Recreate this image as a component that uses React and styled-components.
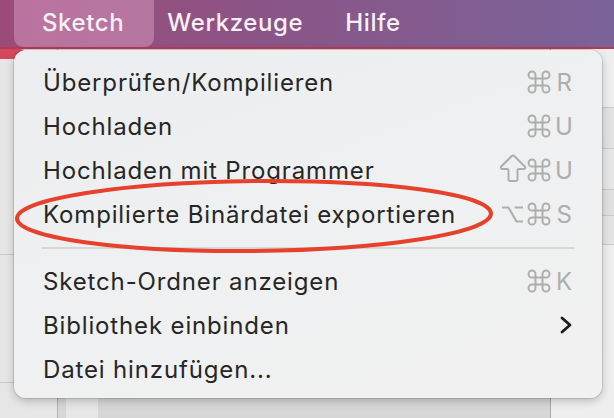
import React from "react";
import styled, { createGlobalStyle } from "styled-components";
import { Command, ArrowBigUp } from "lucide-react";

const Global = createGlobalStyle`
  html, body { margin: 0; padding: 0; }
  body {
    width: 614px; height: 418px; overflow: hidden;
    background: #e8e8e8;
    font-family: Inter, "Noto Sans", "Liberation Sans", sans-serif;
    -webkit-font-smoothing: antialiased;
  }
`;

const Page = styled.div`
  position: relative;
  width: 614px;
  height: 418px;
  display: flex;
  flex-direction: column;
  overflow: hidden;
`;

const MenuBar = styled.div`
  height: 47px;
  flex: none;
  display: flex;
  align-items: stretch;
  padding-left: 14px;
  background: linear-gradient(90deg, #9c4b78 0%, #8a5587 45%, #7a6399 100%);
  border-bottom: 2px solid #b43a55;
`;

const BarItem = styled.div`
  display: flex;
  align-items: center;
  padding: 0 ${(p) => p.$padR}px 2px ${(p) => p.$padL}px;
  margin-right: ${(p) => p.$gap || 0}px;
  font-size: 24px;
  letter-spacing: 0.6px;
  font-weight: 500;
  color: #f8f0f6;
  border-radius: 0 0 9px 9px;
  background: ${(p) => (p.$active ? "rgba(224, 164, 204, 0.45)" : "transparent")};
`;

const Desktop = styled.div`
  flex: 1;
  display: flex;
  flex-direction: row;
  background: #ececec;
`;

const LeftPane = styled.div`
  width: 57px;
  flex: none;
  display: flex;
  flex-direction: column;
  background: #e6e6e6;
`;

const RedCorner = styled.div`
  height: 10px;
  width: 30px;
  background: #d4485f;
  border-radius: 0 12px 0 0;
`;

const HLine = styled.div`
  height: 1px;
  background: #c8c8c8;
  margin-top: ${(p) => p.$top}px;
`;

const CenterPane = styled.div`
  flex: 1;
  display: flex;
  flex-direction: row;
  border-left: 1px solid #b0b0b0;
  border-right: 1px solid #a8a8a8;
  background: linear-gradient(180deg, #e4e4e4 0%, #d6d6d6 100%);
`;

const CenterStrip = styled.div`
  width: 32px;
  margin-left: 8px;
  background: #e6e6e6;
`;

const RightPane = styled.div`
  width: 63px;
  flex: none;
  display: flex;
  flex-direction: column;
  background: #eeeeee;
`;

const RightBand = styled.div`
  height: ${(p) => p.$h}px;
  background: ${(p) => p.$bg};
  border-bottom: 1px solid #c9c9c9;
`;

const Menu = styled.div`
  position: absolute;
  left: 14px;
  top: 50px;
  width: 588px;
  height: 348px;
  box-sizing: border-box;
  padding: 10px 0 7px;
  border-radius: 12px;
  background: linear-gradient(160deg, #ebedf0 0%, #eff0f1 50%, #f1f1f1 100%);
  box-shadow: 0 0 0 1px rgba(0, 0, 0, 0.1), 0 3px 8px rgba(0, 0, 0, 0.22);
  display: flex;
  flex-direction: column;
`;

const Row = styled.div`
  height: 44px;
  flex: none;
  display: flex;
  align-items: center;
  justify-content: space-between;
  padding: 0 30px 0 29px;
  font-size: 24px;
  color: #262626;
  letter-spacing: 0.85px;
`;

const Label = styled.span`
  white-space: nowrap;
`;

const Shortcut = styled.span`
  display: flex;
  align-items: center;
  gap: 4px;
  color: #adadad;
`;

const Key = styled.span`
  font-size: 24px;
  letter-spacing: 0;
  width: 17px;
  margin-left: 1px;
  text-align: right;
`;

const Separator = styled.div`
  height: 23px;
  flex: none;
  display: flex;
  align-items: center;
  padding: 0 28px;
  &::after {
    content: "";
    flex: 1;
    height: 2px;
    background: #d6d6d6;
  }
`;

const Overlay = styled.svg`
  position: absolute;
  left: 0;
  top: 0;
  pointer-events: none;
`;

function Chevron() {
  return (
    <svg width="12" height="18" viewBox="0 0 12 18">
      <path d="M2 2 L10 9 L2 16" fill="none" stroke="#1c1c1c" strokeWidth="2.8" strokeLinecap="round" strokeLinejoin="round" />
    </svg>
  );
}

function OptionKey() {
  return (
    <svg width="23" height="17" viewBox="0 0 23 17">
      <path d="M1 1.5 H7.5 L15.5 15.5 H22 M13.5 1.5 H22" fill="none" stroke="#adadad" strokeWidth="2.1" strokeLinejoin="round" />
    </svg>
  );
}

function CmdKey() {
  return (
    <Command size={28} strokeWidth={1.65} color="#adadad" style={{ margin: "-3px" }} />
  );
}

function ShiftKey() {
  return (
    <ArrowBigUp size={36} strokeWidth={1.3} color="#adadad" style={{ margin: "-8px -7px -6px" }} />
  );
}

const modIcons = { cmd: CmdKey, shift: ShiftKey, opt: OptionKey };

const items = [
  { label: "Überprüfen/Kompilieren", mods: ["cmd"], key: "R" },
  { label: "Hochladen", mods: ["cmd"], key: "U" },
  { label: "Hochladen mit Programmer", mods: ["shift", "cmd"], key: "U" },
  { label: "Kompilierte Binärdatei exportieren", mods: ["opt", "cmd"], key: "S" },
  { sep: true },
  { label: "Sketch-Ordner anzeigen", mods: ["cmd"], key: "K" },
  { label: "Bibliothek einbinden", submenu: true },
  { label: "Datei hinzufügen..." },
];

export default function App() {
  return (
    <>
      <Global />
      <Page>
        <MenuBar>
          <BarItem $active $padL={28} $padR={30}>Sketch</BarItem>
          <BarItem $padL={13} $padR={13} $gap={16}>Werkzeuge</BarItem>
          <BarItem $padL={13} $padR={13}>Hilfe</BarItem>
        </MenuBar>
        <Desktop>
          <LeftPane>
            <RedCorner />
            <HLine $top={195} />
            <HLine $top={127} />
          </LeftPane>
          <CenterPane>
            <CenterStrip />
          </CenterPane>
          <RightPane>
            <RightBand $h={58} $bg="#eeeeee" />
            <RightBand $h={40} $bg="#e2e2e2" />
            <RightBand $h={40} $bg="#e6e6e6" />
            <RightBand $h={25} $bg="#e0e0e0" />
            <RightBand $h={28} $bg="#e4e4e4" />
          </RightPane>
        </Desktop>
        <Menu>
          {items.map((it, i) =>
            it.sep ? (
              <Separator key={i} />
            ) : (
              <Row key={i}>
                <Label>{it.label}</Label>
                {it.key && (
                  <Shortcut>
                    {it.mods.map((m) => {
                      const Icon = modIcons[m];
                      return <Icon key={m} />;
                    })}
                    <Key>{it.key}</Key>
                  </Shortcut>
                )}
                {it.submenu && <Chevron />}
              </Row>
            )
          )}
        </Menu>
        <Overlay width="614" height="418" viewBox="0 0 614 418">
          <ellipse cx="254" cy="216" rx="237" ry="35" fill="none" stroke="#e6412c" strokeWidth="4" transform="rotate(-0.6 254 216)" />
        </Overlay>
      </Page>
    </>
  );
}
